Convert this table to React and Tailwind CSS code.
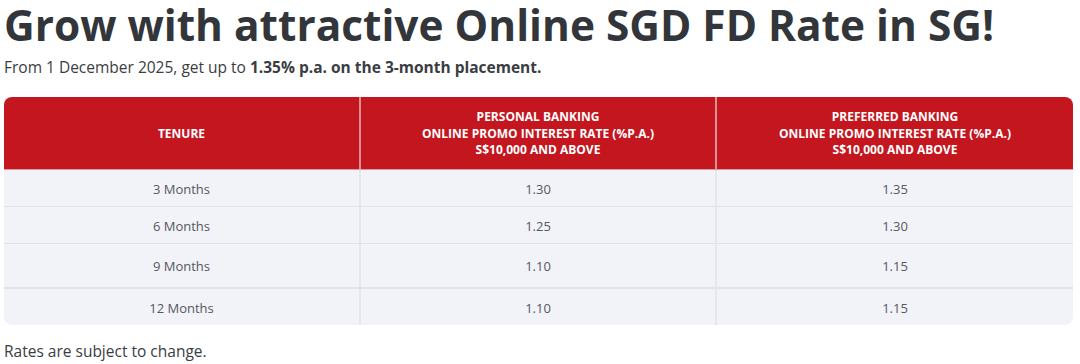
import React from "react";

const rows = [
  { t: "3 Months", p: "1.30", f: "1.35", h: "h-[37px]", b: "border-b border-[#e2e3e8]" },
  { t: "6 Months", p: "1.25", f: "1.30", h: "h-[37px]", b: "border-b border-[#e2e3e8]" },
  { t: "9 Months", p: "1.10", f: "1.15", h: "h-[45px]", b: "border-b-2 border-[#e2e3e8]" },
  { t: "12 Months", p: "1.10", f: "1.15", h: "h-[36px]", b: "" },
];

export default function App() {
  return (
    <div className="w-[1080px] h-[364px] bg-white overflow-hidden" style={{ fontFamily: '"Open Sans", "Noto Sans", sans-serif' }}>
      <div className="px-[4px]">
        <h1 className="text-[42.4px] font-bold leading-[50px] text-[#32363a] whitespace-nowrap">
          Grow with attractive Online SGD FD Rate in SG!
        </h1>
        <p className="text-[15.5px] leading-[22px] text-[#3a3d42] mt-[6px]">
          From 1 December 2025, get up to <span className="font-bold">1.35% p.a. on the 3-month placement.</span>
        </p>
        <div className="mt-[19px] w-[1069px] rounded-[8px] overflow-hidden bg-[#f2f3f8]">
          <div className="grid grid-cols-[357px_356px_356px] h-[73px] bg-[#c3161f] text-white text-[12px] font-bold leading-[16.5px] text-center uppercase border-b border-[#e09a9e]">
            <div className="flex items-center justify-center pt-[2px] border-r-2 border-[#dc8f93]">TENURE</div>
            <div className="flex items-center justify-center pt-[2px] border-r-2 border-[#dc8f93]">
              <div>PERSONAL BANKING<br />ONLINE PROMO INTEREST RATE (%P.A.)<br />S$10,000 AND ABOVE</div>
            </div>
            <div className="flex items-center justify-center pt-[2px]">
              <div>PREFERRED BANKING<br />ONLINE PROMO INTEREST RATE (%P.A.)<br />S$10,000 AND ABOVE</div>
            </div>
          </div>
          {rows.map((r) => (
            <div key={r.t} className={`grid grid-cols-[357px_356px_356px] ${r.h} ${r.b} text-[13px] text-[#55585d] text-center`}>
              <div className="flex items-center justify-center pt-[3px] border-r-2 border-[#e6e7ec]">{r.t}</div>
              <div className="flex items-center justify-center pt-[3px] border-r-2 border-[#e6e7ec]">{r.p}</div>
              <div className="flex items-center justify-center pt-[3px]">{r.f}</div>
            </div>
          ))}
        </div>
        <p className="text-[15.5px] leading-[22px] text-[#3a3d42] mt-[15px]">Rates are subject to change.</p>
      </div>
    </div>
  );
}
